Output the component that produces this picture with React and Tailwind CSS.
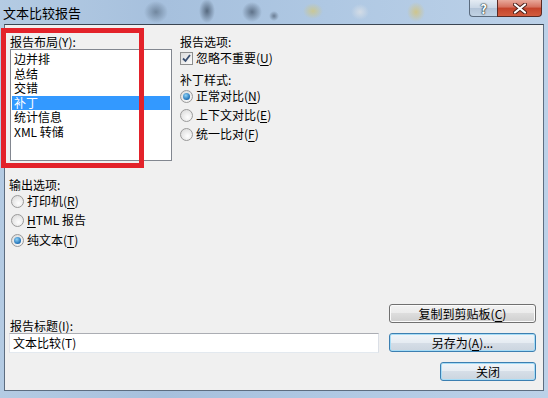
import React from "react";

const F = "font-['Noto_Sans_CJK_SC','Noto_Sans',sans-serif]";

function Check() {
  return (
    <span className="w-[13px] h-[13px] border border-[#8e8f8f] bg-[linear-gradient(135deg,#dcdcdc,#fbfbfb)] flex items-center justify-center shrink-0">
      <svg width="11" height="11" viewBox="0 0 11 11">
        <path d="M2 5.5 L4.5 8 L9 2" fill="none" stroke="#3a4f70" strokeWidth="1.8" />
      </svg>
    </span>
  );
}

function Radio({ on }) {
  return (
    <span className="w-[13px] h-[13px] rounded-full border border-[#9a9a9a] bg-[radial-gradient(circle_at_60%_65%,#fefefe,#d6d6d6)] flex items-center justify-center shrink-0">
      {on && (
        <span className="w-[7px] h-[7px] rounded-full bg-[radial-gradient(circle_at_40%_35%,#8fd3f7,#1f6fb5_70%,#12508a)]" />
      )}
    </span>
  );
}

function U({ children }) {
  return <span className="underline underline-offset-[2px]">{children}</span>;
}

function Btn({ children, def, className = "" }) {
  return (
    <div
      className={
        "h-[19px] rounded-[3px] border flex items-center justify-center text-[12px] leading-[15px] text-black " +
        (def
          ? "border-[#3c7fb1] shadow-[inset_0_0_0_1px_#a6dcf6] bg-[linear-gradient(#f1f5f9,#e6ecf2_50%,#d6dee7_50%,#cbd5df)] "
          : "border-[#707070] shadow-[inset_0_0_0_1px_#fbfbfb] bg-[linear-gradient(#f2f2f2,#ebebeb_50%,#dddddd_50%,#cfcfcf)] ") +
        className
      }
    >
      {children}
    </div>
  );
}

export default function App() {
  const items = ["边并排", "总结", "交错", "补丁", "统计信息", "XML 转储"];
  return (
    <div
      className={
        "relative w-[548px] h-[398px] overflow-hidden flex flex-col text-black " +
        F +
        " bg-[radial-gradient(ellipse_12px_11px_at_156px_12px,#71879f,transparent),radial-gradient(ellipse_8px_12px_at_207px_11px,#56697f,transparent),radial-gradient(ellipse_10px_10px_at_252px_12px,#5f7289,transparent),radial-gradient(ellipse_5px_5px_at_274px_16px,#6a7d94,transparent),radial-gradient(ellipse_10px_8px_at_313px_11px,#c9c796,transparent),radial-gradient(ellipse_9px_8px_at_360px_12px,#d3dce6,transparent),radial-gradient(ellipse_9px_10px_at_416px_12px,#cfc58c,transparent),linear-gradient(90deg,#b4cbe3,#a6c0dd_30%,#afc8e3_60%,#bcd1e8)]"
      }
    >
      {/* title bar */}
      <div className="h-[24px] flex items-start shrink-0">
        <div className="pl-[3px] pt-[4px] text-[13px] leading-[17px] text-black">文本比较报告</div>
        <div className="flex-1" />
        <div className="flex mr-[6px]">
          <div className="w-[28px] h-[17px] rounded-bl-[4px] border border-t-0 border-r-0 border-[#5b6b7e] bg-[linear-gradient(#e4ebf3,#c9d6e5_50%,#b3c4d8_50%,#c1d2e4)] flex items-center justify-center text-[13px] font-bold leading-none text-white [text-shadow:0_0_1px_#233,0_0_1px_#233,0_0_2px_#233]">
            ?
          </div>
          <div className="w-[45px] h-[17px] rounded-br-[4px] border border-t-0 border-[#5a2a24] bg-[linear-gradient(#e9a99b,#d5705d_45%,#c4432a_50%,#d25c3e)] flex items-center justify-center">
            <svg width="14" height="11" viewBox="0 0 14 11">
              <path d="M2 1.5 L12 9.5 M12 1.5 L2 9.5" stroke="#4a1f18" strokeWidth="4" strokeLinecap="round" />
              <path d="M2 1.5 L12 9.5 M12 1.5 L2 9.5" stroke="#ffffff" strokeWidth="2.2" strokeLinecap="round" />
            </svg>
          </div>
        </div>
      </div>

      {/* client area */}
      <div className="mx-[4px] h-[367px] shrink-0 border border-[#5d6d80] border-t-[#3a4552] bg-[#f0f0f0] flex flex-col text-[12px]">
        {/* top section */}
        <div className="flex pt-[9px] pl-[5px]">
          <div className="w-[162px] flex flex-col">
            <div className="h-[15px] leading-[15px]">
              报告布局(<U>Y</U>):
            </div>
            <div className="h-[112px] border border-[#828790] bg-white px-[1px] pt-[2px]">
              {items.map((t, i) => (
                <div
                  key={t}
                  className={
                    "h-[14.6px] leading-[14.6px] pl-[2px] " +
                    (i === 3 ? "bg-[#3399ff] text-white" : "")
                  }
                >
                  {t}
                </div>
              ))}
            </div>
          </div>
          <div className="ml-[8px] flex flex-col">
            <div className="h-[15px] leading-[15px]">报告选项:</div>
            <div className="mt-[2px] h-[14px] flex items-center gap-[3px]">
              <Check />
              <span className="leading-[14px]">
                忽略不重要(<U>U</U>)
              </span>
            </div>
            <div className="mt-[7px] h-[15px] leading-[15px]">补丁样式:</div>
            <div className="mt-[2px] h-[14px] flex items-center gap-[3px]">
              <Radio on />
              <span className="leading-[14px]">
                正常对比(<U>N</U>)
              </span>
            </div>
            <div className="mt-[5px] h-[14px] flex items-center gap-[3px]">
              <Radio />
              <span className="leading-[14px]">
                上下文对比(<U>E</U>)
              </span>
            </div>
            <div className="mt-[5px] h-[14px] flex items-center gap-[3px]">
              <Radio />
              <span className="leading-[14px]">
                统一比对(<U>F</U>)
              </span>
            </div>
          </div>
        </div>

        {/* output section */}
        <div className="mt-[16px] pl-[4px] flex flex-col">
          <div className="h-[15px] leading-[15px]">输出选项:</div>
          <div className="mt-[2px] h-[14px] flex items-center gap-[3px] pl-[2px]">
            <Radio />
            <span className="leading-[14px]">
              打印机(<U>R</U>)
            </span>
          </div>
          <div className="mt-[5px] h-[14px] flex items-center gap-[3px] pl-[2px]">
            <Radio />
            <span className="leading-[14px]">
              <U>H</U>TML 报告
            </span>
          </div>
          <div className="mt-[6px] h-[14px] flex items-center gap-[3px] pl-[2px]">
            <Radio on />
            <span className="leading-[14px]">
              纯文本(<U>T</U>)
            </span>
          </div>
        </div>

        <div className="flex-1" />

        {/* bottom section */}
        <div className="flex pl-[4px] pr-[7px] pb-[9px]">
          <div className="w-[370px] flex flex-col mt-[15px]">
            <div className="h-[14px] leading-[14px] pl-[1px]">
              报告标题(<U>I</U>):
            </div>
            <div className="h-[20px] border border-[#abadb3] border-b-[#e3e9ef] border-l-[#e2e3ea] border-r-[#dbdfe6] bg-white flex items-center pl-[3px] leading-[14px]">
              文本比较(T)
            </div>
          </div>
          <div className="ml-[10px] flex-1 flex flex-col items-end">
            <Btn className="w-full">
              复制到剪贴板(<U>C</U>)
            </Btn>
            <Btn def className="w-full mt-[10px]">
              另存为(<U>A</U>)...
            </Btn>
            <Btn def className="w-[96px] mt-[10px]">
              关闭
            </Btn>
          </div>
        </div>
      </div>

      <div className="flex-1" />

      {/* red annotation */}
      <div className="absolute left-[1px] top-[28px] w-[143px] h-[140px] border-[5px] border-[#e3222a] pointer-events-none" />
    </div>
  );
}
